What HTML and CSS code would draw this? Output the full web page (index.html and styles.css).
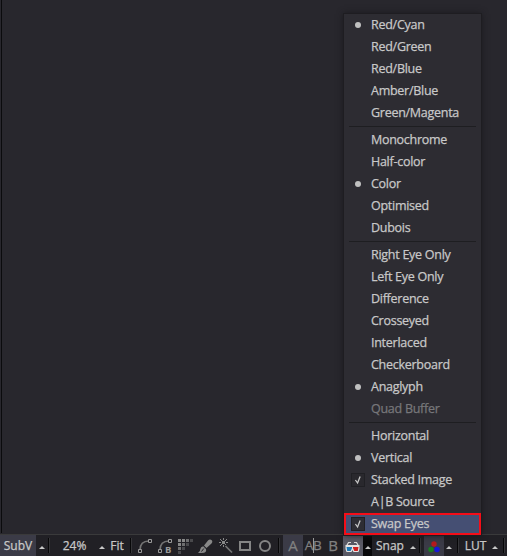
FILE: index.html
```
<!DOCTYPE html>
<html lang="en">
<head>
<meta charset="utf-8">
<title>Viewer</title>
<link rel="stylesheet" href="styles.css">
</head>
<body>
<main class="viewer">
  <div class="canvas"></div>
  <footer class="toolbar">
    <button class="w36 on">SubV</button>
    <button class="w12"><i class="up"></i></button>
    <span class="sep"></span>
    <button class="w49">24%</button>
    <button class="w5"><i class="up"></i></button>
    <button class="w26">Fit</button>
    <span class="sep"></span>
    <div class="tools">
      <svg viewBox="0 0 20 20"><path d="M4 15Q4 6 13 6" class="thick"/><path d="M2.500 14.500h3v3h-3zM12.500 4.500h3v3h-3z" class="node"/></svg>
      <svg viewBox="0 0 20 20"><path d="M4 15Q4 6 13 6" class="thick"/><path d="M2.500 14.500h3v3h-3zM12.500 4.500h3v3h-3z" class="node"/><text x="9" y="17.500" class="tiny">B</text></svg>
      <svg viewBox="0 0 20 20"><g class="fill"><path d="M2 4h3v3H2zM6 4h3v3H6zM2 8h3v3H2z"/><path d="M10 4h3v3h-3zM6 8h3v3H6zM2 12h3v3H2z" opacity=".75"/><path d="M14 4h3v3h-3zM10 8h3v3h-3zM6 12h3v3H6zM2 16h3v3H2z" opacity=".4"/></g></svg>
      <svg viewBox="0 0 20 20"><path class="fill" d="M16 5.500Q14 3.500 12 5.500L8 10.500l2.500 2.500L15.500 8.500Q17 7 16 5.500ZM7.200 11.200l2.800 2.800Q11 18 6 18H2Q4.500 16.500 4.200 14.200 4.700 11.500 7.200 11.200Z"/><path d="M5.500 16.500l2.300-3" class="cut"/></svg>
      <svg viewBox="0 0 20 20"><path class="thick" d="M9.500 11l6.500 6.500"/><path class="fill" d="M7 3h1v2H7zM7 10h1v2H7zM3 7h2v1H3zM10 7h2v1h-2zM4 4h1v1H4zM5 5h1v1H5zM10 4h1v1h-1zM9 5h1v1H9zM6 6h3v3H6zM4 10h1v1H4zM5 9h1v1H5zM9 9h1v1H9z"/></svg>
      <svg viewBox="0 0 20 20"><rect x="4" y="7" width="10" height="8" class="shape"/></svg>
      <svg viewBox="0 0 20 20"><circle cx="9" cy="11" r="5" class="shape"/></svg>
    </div>
    <span class="sep"></span>
    <div class="compare">
      <button class="w20 on big">A</button>
      <button class="w20 big split"><span>A</span><i></i><span>B</span></button>
      <button class="w20 big">B</button>
    </div>
    <button class="w20 glasses">
      <svg viewBox="0 0 20 20"><path d="M3.500 10L5.500 6.500h2.500M15.500 10l-2-3.500H11" class="frame"/><path d="M2.500 9h14v4l-1 3h-5L9.500 14 8.500 16h-5l-1-3z" fill="#e4e4e4"/><path d="M3.500 11H9v1l-1.300 3H4.200z" fill="#1b77b5"/><path d="M10 11h5.500l-.7 4h-3.500L10 12z" fill="#cf2020"/></svg>
    </button>
    <button class="w9 black"><i class="up"></i></button>
    <button class="w36">Snap</button>
    <button class="w9"><i class="up"></i></button>
    <span class="sep near"></span>
    <button class="w20 rgb on"><svg viewBox="0 0 20 20"><circle cx="10" cy="8" r="2.700" fill="#b51a1d"/><circle cx="7" cy="13.500" r="2.700" fill="#18801f"/><circle cx="13" cy="13.500" r="2.700" fill="#1616dc"/></svg></button>
    <button class="w9"><i class="up"></i></button>
    <span class="sep far"></span>
    <button class="w31 lut">LUT</button>
    <button class="w8"><i class="up"></i></button>
    <span class="sep far"></span>
  </footer>
</main>
<ul class="menu">
  <li class="dot">Red/Cyan</li>
  <li>Red/Green</li>
  <li>Red/Blue</li>
  <li>Amber/Blue</li>
  <li>Green/Magenta</li>
  <li class="rule"></li>
  <li>Monochrome</li>
  <li>Half-color</li>
  <li class="dot">Color</li>
  <li>Optimised</li>
  <li>Dubois</li>
  <li class="rule"></li>
  <li>Right Eye Only</li>
  <li>Left Eye Only</li>
  <li>Difference</li>
  <li>Crosseyed</li>
  <li>Interlaced</li>
  <li>Checkerboard</li>
  <li class="dot">Anaglyph</li>
  <li class="off">Quad Buffer</li>
  <li class="rule"></li>
  <li>Horizontal</li>
  <li class="dot">Vertical</li>
  <li><svg class="check" viewBox="0 0 14 14"><path d="M4 7l2.500 3.500L9.500 3"/></svg>Stacked Image</li>
  <li>A|B Source</li>
  <li class="hot"><svg class="check" viewBox="0 0 14 14"><path d="M4 7l2.500 3.500L9.500 3"/></svg>Swap Eyes</li>
</ul>
</body>
</html>
```
FILE: styles.css
```
* { box-sizing: border-box; }
body { margin: 0; background: #28272d; color: #c8c8c8; font: 12.5px/22px "Open Sans", "Noto Sans", sans-serif; overflow: hidden; -webkit-text-stroke: .25px; }
.viewer { display: flex; flex-direction: column; width: 507px; height: 556px; }
.canvas { flex: 1; margin-bottom: 1px; border-left: 1px solid #0b0b0d; margin-left: 1px; }
.toolbar { display: flex; flex: 0 0 22px; border-top: 1px solid #3a3a3b; background: #212025; }
button { display: flex; flex: none; align-items: center; justify-content: center; height: 21px; margin: 0; padding: 0; border: 0; background: none; color: inherit; font: 12px/21px "Open Sans", "Noto Sans", sans-serif; white-space: nowrap; -webkit-text-stroke: .25px; }
.on { background: #3b3b47; }
.w5 { width: 5px; }
.w8 { width: 8px; }
.w9 { width: 9px; }
.w12 { width: 12px; }
.w20 { width: 20px; }
.w26 { width: 26px; }
.w31 { width: 31px; }
.w36 { width: 36px; }
.w49 { width: 49px; }
.up { flex: none; width: 0; height: 0; margin-top: 3px; border: 3px solid transparent; border-top: 0; border-bottom-color: #c8c8c8; }
.sep { flex: none; width: 2px; height: 15px; margin-top: 3px; background: linear-gradient(90deg, #070708 50%, #353538 50%); }
.tools { display: flex; flex: none; width: 146px; padding-left: 4px; }
.tools svg { flex: none; width: 20px; height: 20px; }
svg { display: block; }
.thick { fill: none; stroke: #747474; stroke-width: 1.7; }
.node { fill: #212025; stroke: #999; }
.fill { fill: #888; }
.cut { fill: none; stroke: #212025; }
.shape { fill: none; stroke: #858585; stroke-width: 2; }
.tiny { fill: #999; font: bold 9.5px "Open Sans", sans-serif; }
.compare { display: flex; flex: none; width: 63px; padding-left: 3px; }
.big { color: #818181; font-size: 15px; }
.split { position: relative; font-size: 13.5px; letter-spacing: -.5px; }
.split i { position: absolute; left: 10px; top: 3px; width: 1px; height: 15px; background: #999; }
.glasses { background: #595965; }
.glasses svg, .rgb svg { width: 20px; height: 20px; }
.frame { fill: none; stroke: #ddd; stroke-width: 1.2; }
.black { background: #08080a; }
.rgb { margin-left: 3px; }
.near { margin-left: 2px; }
.far { margin-left: 4px; }
.lut { margin-left: 1px; }
.menu { position: absolute; left: 344px; top: 14px; width: 137px; margin: 0; padding: 0; list-style: none; letter-spacing: -.27px; background: #2d2c32; box-shadow: 0 0 0 1px #1e1d21, 0 0 7px #16151a; }
.menu li { position: relative; height: 22px; padding-left: 27px; }
.menu .rule { height: 5px; padding: 2px 5px; }
.rule::before { content: ""; display: block; height: 1px; background: #1e1e21; }
.dot::before { content: ""; position: absolute; left: 11px; top: 8px; width: 6px; height: 6px; border-radius: 50%; background: #c0c0c0; }
.menu .off { color: #77777a; }
.menu .hot { background: #454f73; box-shadow: inset 0 0 0 2px #f50d18; }
.check { position: absolute; left: 7px; top: 4px; width: 14px; height: 14px; border: 1px solid #202024; background: #29282d; }
.hot .check { background: #2e2d34; }
.check path { fill: none; stroke: #c8c8c8; stroke-width: 1.5; }
```
